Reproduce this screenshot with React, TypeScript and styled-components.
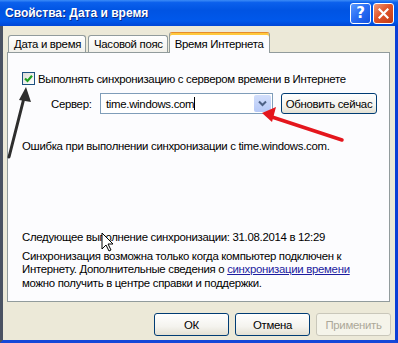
import React from 'react'
import styled, { createGlobalStyle, css } from 'styled-components'

const GlobalStyle = createGlobalStyle`
    html, body {
        margin: 0;
        padding: 0;
        background: #ece9d8;
        overflow: hidden;
    }
    body {
        font-family: "Liberation Sans", "DejaVu Sans", sans-serif;
        font-size: 11.4px;
        letter-spacing: -0.3px;
        color: #000;
    }
`;

const Window = styled.div`
    position: relative;
    width: 398px;
    height: 343px;
    box-sizing: border-box;
    display: flex;
    flex-direction: column;
    background: #ece9d8;
    border-left: 3px solid #4a5262;
    border-right: 3px solid #0b3fd6;
    border-bottom: 3px solid #1648d8;
`;

const TitleBar = styled.div`
    height: 26px;
    margin: 0 -3px;
    padding: 0 4px 0 5px;
    display: flex;
    align-items: center;
    justify-content: space-between;
    background: linear-gradient(to bottom, #3c8cf7 0%, #0b60ec 10%, #0054e3 40%, #0058eb 80%, #0046d6 100%);
`;

const Title = styled.span`
    color: #fff;
    font-family: "Liberation Sans", "DejaVu Sans", sans-serif;
    font-weight: 700;
    font-size: 12px;
    letter-spacing: 0;
    text-shadow: 1px 1px 0 #0a2a8a;
`;

const CaptionButtons = styled.div`
    display: flex;
    gap: 2px;
`;

const CaptionButton = styled.div<{ $kind: 'help' | 'close' }>`
    width: 19px;
    height: 19px;
    border: 1px solid #fff;
    border-radius: 3px;
    display: flex;
    align-items: center;
    justify-content: center;
    color: #fff;
    font-family: "DejaVu Sans", sans-serif;
    font-weight: 700;
    font-size: 15px;
    letter-spacing: 0;
    ${({ $kind }) =>
        $kind === 'help'
            ? css`background: linear-gradient(135deg, #5b9bff 0%, #2a6ff5 45%, #1250e0 100%);`
            : css`background: linear-gradient(135deg, #f09a7a 0%, #e0542a 45%, #c23b14 100%);`}
`;

const Body = styled.div`
    flex: 1;
    display: flex;
    flex-direction: column;
    padding: 6px 5px 4px 4px;
`;

const TabRow = styled.div`
    height: 21px;
    margin-bottom: -1px;
    display: flex;
    align-items: flex-end;
    padding-left: 1px;
`;

const Tab = styled.div<{ $active?: boolean }>`
    position: relative;
    box-sizing: border-box;
    display: flex;
    align-items: center;
    border: 1px solid #919b9c;
    border-bottom: none;
    border-radius: 3px 3px 0 0;
    white-space: nowrap;
    ${({ $active }) =>
        $active
            ? css`
                z-index: 2;
                height: 21px;
                padding: 2px 5px 0 5px;
                margin-left: -1px;
                background: #fcfcfe;
                border-top: 1px solid #e68b2c;
                box-shadow: inset 0 2px 0 #ffc83c;
            `
            : css`
                height: 17px;
                margin-bottom: 1px;
                margin-right: 2px;
                padding: 0 4px 0 5px;
                background: linear-gradient(to bottom, #ffffff, #f1f0ea);
            `}
`;

const Panel = styled.div`
    position: relative;
    z-index: 1;
    height: 250px;
    box-sizing: border-box;
    display: flex;
    flex-direction: column;
    padding: 19px 8px 11px 14px;
    border: 1px solid #919b9c;
    background: #fcfcfe;
    white-space: nowrap;
`;

const CheckRow = styled.label`
    display: flex;
    align-items: center;
    gap: 3px;
    height: 13px;
`;

const Checkbox = styled.span`
    width: 13px;
    height: 13px;
    box-sizing: border-box;
    border: 1px solid #1c5180;
    background: linear-gradient(135deg, #dcdcd7, #ffffff);
    display: flex;
    align-items: center;
    justify-content: center;
`;

const ServerRow = styled.div`
    display: flex;
    align-items: center;
    margin: 8px 0 0 29px;
    height: 21px;
`;

const FieldLabel = styled.span`
    width: 49px;
`;

const Combo = styled.div`
    width: 173px;
    height: 21px;
    box-sizing: border-box;
    border: 1px solid #7f9db9;
    background: #fff;
    display: flex;
    align-items: center;
    padding: 1px;
`;

const ComboText = styled.span`
    flex: 1;
    padding-left: 4px;
`;

const Caret = styled.span`
    display: inline-block;
    width: 1px;
    height: 13px;
    background: #000;
    vertical-align: -2px;
`;

const ComboButton = styled.span`
    width: 17px;
    height: 17px;
    border-radius: 2px;
    background: linear-gradient(to bottom, #d2defb, #b6c9f7);
    display: flex;
    align-items: center;
    justify-content: center;
`;

const Button = styled.div<{ $width?: number; $disabled?: boolean }>`
    box-sizing: border-box;
    width: ${({ $width }) => ($width ? `${$width}px` : 'auto')};
    height: ${({ $width }) => ($width ? '23px' : '21px')};
    padding: 0 2px;
    display: flex;
    align-items: center;
    justify-content: center;
    white-space: nowrap;
    border-radius: 3px;
    border: 1px solid ${({ $disabled }) => ($disabled ? '#c9c7ba' : '#003c74')};
    color: ${({ $disabled }) => ($disabled ? '#aca899' : '#000')};
    background: ${({ $disabled }) =>
        $disabled ? '#f5f4ea' : 'linear-gradient(to bottom, #ffffff 0%, #f4f3ee 60%, #e3e0d3 100%)'};
`;

const RefreshButton = styled(Button)`
    margin-left: 8px;
    width: 96px;
`;

const StatusText = styled.div<{ $gap?: number }>`
    line-height: 13px;
    margin-top: ${({ $gap }) => $gap ?? 0}px;
`;

const Spacer = styled.div`
    flex: 1;
`;

const Note = styled.div`
    margin-top: 6px;
    line-height: 13.5px;
`;

const Link = styled.span`
    color: #1c1ca0;
    text-decoration: underline;
`;

const ButtonRow = styled.div`
    margin: 11px -1px 0 0;
    display: flex;
    justify-content: flex-end;
    gap: 6px;
`;

const Overlay = styled.svg`
    position: absolute;
    left: -3px;
    top: 0;
    width: 398px;
    height: 343px;
    pointer-events: none;
    z-index: 5;
`;

const App: React.FC = () => {
    return (
        <>
            <GlobalStyle />
            <Window>
                <TitleBar>
                    <Title>Свойства: Дата и время</Title>
                    <CaptionButtons>
                        <CaptionButton $kind="help">?</CaptionButton>
                        <CaptionButton $kind="close">
                            <svg width="11" height="11" viewBox="0 0 11 11">
                                <path d="M1.5 1.5 L9.5 9.5 M9.5 1.5 L1.5 9.5" stroke="#fff" strokeWidth="2.2" strokeLinecap="square" />
                            </svg>
                        </CaptionButton>
                    </CaptionButtons>
                </TitleBar>
                <Body>
                    <TabRow>
                        <Tab>Дата и время</Tab>
                        <Tab>Часовой пояс</Tab>
                        <Tab $active>Время Интернета</Tab>
                    </TabRow>
                    <Panel>
                        <CheckRow>
                            <Checkbox>
                                <svg width="9" height="9" viewBox="0 0 9 9">
                                    <path d="M1 4.5 L3.5 7 L8 1.8" fill="none" stroke="#21a121" strokeWidth="2.2" />
                                </svg>
                            </Checkbox>
                            <span>Выполнять синхронизацию с сервером времени в Интернете</span>
                        </CheckRow>
                        <ServerRow>
                            <FieldLabel>Сервер:</FieldLabel>
                            <Combo>
                                <ComboText>time.windows.com<Caret /></ComboText>
                                <ComboButton>
                                    <svg width="9" height="7" viewBox="0 0 9 7">
                                        <path d="M1 1.5 L4.5 5 L8 1.5" fill="none" stroke="#4d6185" strokeWidth="2" />
                                    </svg>
                                </ComboButton>
                            </Combo>
                            <RefreshButton>Обновить сейчас</RefreshButton>
                        </ServerRow>
                        <StatusText $gap={26}>Ошибка при выполнении синхронизации с time.windows.com.</StatusText>
                        <Spacer />
                        <StatusText>Следующее выполнение синхронизации: 31.08.2014 в 12:29</StatusText>
                        <Note>
                            Синхронизация возможна только когда компьютер подключен к<br />
                            Интернету. Дополнительные сведения о <Link>синхронизации времени</Link><br />
                            можно получить в центре справки и поддержки.
                        </Note>
                    </Panel>
                    <ButtonRow>
                        <Button $width={75}>ОК</Button>
                        <Button $width={75}>Отмена</Button>
                        <Button $width={75} $disabled>Применить</Button>
                    </ButtonRow>
                </Body>
                <Overlay viewBox="0 0 398 343">
                    {/* dark arrow to the checkbox */}
                    <path d="M9 157 L25 94" stroke="#2e2e2e" strokeWidth="3" strokeLinecap="round" />
                    <path d="M26 87 L19 100 L31 102 Z" fill="#2e2e2e" />
                    {/* red arrow to the dropdown */}
                    <path d="M342 140 L272 117" stroke="#e4161d" strokeWidth="3.5" strokeLinecap="round" />
                    <path d="M262 113 L276 107 L272 122 Z" fill="#e4161d" />
                    {/* mouse pointer */}
                    <path d="M102 233 L102 249 L106 245 L109 251 L111 250 L108 244 L113 244 Z" fill="#fff" stroke="#000" strokeWidth="1" strokeLinejoin="round" />
                </Overlay>
            </Window>
        </>
    )
}

export default App;
